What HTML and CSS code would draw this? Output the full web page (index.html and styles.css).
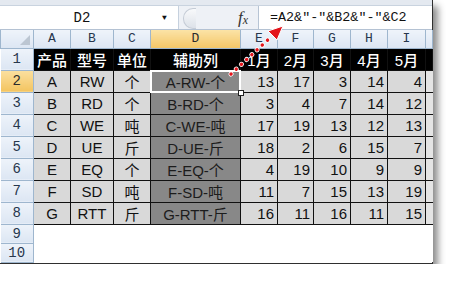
FILE: index.html
```html
<!DOCTYPE html>
<html lang="zh-CN">
<head>
  <meta charset="UTF-8" />
  <title>辅助列</title>
  <link rel="stylesheet" href="styles.css">
</head>
<body>

  <div class="window">
    <div class="topstrip"></div>

    <div class="fbar">
      <div class="namebox">
        <span class="cellref">D2</span>
        <span class="drop">&#9660;</span>
      </div>
      <div class="grip"></div>
      <div class="fx"><i>f</i><i class="x">x</i></div>
      <div class="formula">=A2&amp;"-"&amp;B2&amp;"-"&amp;C2</div>
    </div>

    <table class="sheet">
      <colgroup>
        <col style="width:33px"><col style="width:37px"><col style="width:43px"><col style="width:37px">
        <col style="width:90px"><col style="width:37px"><col style="width:36px"><col style="width:37px">
        <col style="width:37px"><col style="width:38px"><col style="width:7px">
      </colgroup>
      <tr class="colheads">
        <th class="corner"><span class="tri"></span></th>
        <th>A</th><th>B</th><th>C</th><th class="active">D</th><th>E</th>
        <th>F</th><th>G</th><th>H</th><th>I</th><th></th>
      </tr>
      <tr class="row titles">
        <th class="rh">1</th>
        <td>产品</td><td>型号</td><td>单位</td><td>辅助列</td>
        <td>1月</td><td>2月</td><td>3月</td><td>4月</td><td>5月</td><td></td>
      </tr>
      <tr class="row">
        <th class="rh active">2</th>
        <td>A</td><td>RW</td><td>个</td><td class="helper selected">A-RW-个</td>
        <td class="num">13</td><td class="num">17</td><td class="num">3</td><td class="num">14</td><td class="num">4</td><td class="edge"></td>
      </tr>
      <tr class="row">
        <th class="rh">3</th>
        <td>B</td><td>RD</td><td>个</td><td class="helper">B-RD-个</td>
        <td class="num">3</td><td class="num">4</td><td class="num">7</td><td class="num">14</td><td class="num">12</td><td class="edge"></td>
      </tr>
      <tr class="row">
        <th class="rh">4</th>
        <td>C</td><td>WE</td><td>吨</td><td class="helper">C-WE-吨</td>
        <td class="num">17</td><td class="num">19</td><td class="num">13</td><td class="num">12</td><td class="num">13</td><td class="edge"></td>
      </tr>
      <tr class="row">
        <th class="rh">5</th>
        <td>D</td><td>UE</td><td>斤</td><td class="helper">D-UE-斤</td>
        <td class="num">18</td><td class="num">2</td><td class="num">6</td><td class="num">15</td><td class="num">7</td><td class="edge"></td>
      </tr>
      <tr class="row">
        <th class="rh">6</th>
        <td>E</td><td>EQ</td><td>个</td><td class="helper">E-EQ-个</td>
        <td class="num">4</td><td class="num">19</td><td class="num">10</td><td class="num">9</td><td class="num">9</td><td class="edge"></td>
      </tr>
      <tr class="row">
        <th class="rh">7</th>
        <td>F</td><td>SD</td><td>吨</td><td class="helper">F-SD-吨</td>
        <td class="num">11</td><td class="num">7</td><td class="num">15</td><td class="num">13</td><td class="num">19</td><td class="edge"></td>
      </tr>
      <tr class="row">
        <th class="rh">8</th>
        <td>G</td><td>RTT</td><td>斤</td><td class="helper">G-RTT-斤</td>
        <td class="num">16</td><td class="num">11</td><td class="num">16</td><td class="num">11</td><td class="num">15</td><td class="edge"></td>
      </tr>
      <tr class="blank">
        <th class="rh">9</th>
        <td colspan="10"></td>
      </tr>
      <tr class="blank">
        <th class="rh">10</th>
        <td colspan="10"></td>
      </tr>
    </table>

    <svg class="arrow" width="454" height="285" viewBox="0 0 454 285">
      <line x1="231" y1="74" x2="272" y2="36" stroke="#fff" stroke-width="5" stroke-linecap="round" stroke-dasharray="0.1 7"/>
      <line x1="231" y1="74" x2="272" y2="36" stroke="#e3141b" stroke-width="3.4" stroke-linecap="round" stroke-dasharray="0.1 7"/>
      <polygon points="283,26 277,40 268,31" fill="#e3141b" stroke="#fff" stroke-width="1"/>
    </svg>
  </div>

</body>
</html>
```

FILE: styles.css
```css
body {
  margin: 0;
  background: #fff;
  font-family: 'Liberation Sans', 'Noto Sans CJK SC', sans-serif;
}

.window {
  position: relative;
  width: 432px;
  border-right: 1px solid #2f2f2f;
  border-bottom: 1px solid #2f2f2f;
  box-shadow: 5px 6px 7px rgba(0,0,0,0.45);
  background: #fff;
}

.topstrip {
  height: 5px;
  background: #e4e9f0;
  border-bottom: 1px solid #c9d3df;
}

.fbar {
  display: flex;
  height: 23px;
  background: #eef1f6;
  border-bottom: 1px solid #b4c2d3;
}

.namebox {
  width: 178px;
  display: flex;
  align-items: center;
  background: #fff;
  border-right: 1px solid #c6d1de;
  font-family: 'Liberation Mono', monospace;
  font-size: 14px;
  color: #111;
}

.cellref {
  flex: 1;
  text-align: center;
  padding-left: 2px;
}

.drop {
  font-size: 8px;
  width: 14px;
  margin-right: 2px;
}

.grip {
  width: 12px;
  height: 19px;
  margin: 2px 0 0 4px;
  border: 1px solid #c5ccd6;
  border-right: none;
  border-radius: 10px 0 0 10px;
  background: linear-gradient(#f8f9fb, #dde2e9);
}

.fx {
  margin-left: auto;
  width: 30px;
  display: flex;
  align-items: center;
  justify-content: center;
  padding-left: 4px;
  font-family: 'Liberation Serif', serif;
  font-size: 17px;
  color: #333;
}

.fx .x {
  font-size: 12px;
  margin-top: 5px;
}

.formula {
  width: 162px;
  padding-left: 11px;
  background: #fff;
  border-left: 1px solid #b7c4d4;
  font-family: 'Liberation Mono', monospace;
  font-size: 13.4px;
  line-height: 23px;
  color: #111;
}

.sheet {
  border-collapse: collapse;
  table-layout: fixed;
  width: 432px;
}

.sheet th {
  padding: 0;
  font-family: 'Liberation Mono', monospace;
  font-weight: normal;
  color: #27374d;
  background: linear-gradient(#eef3fa, #dce6f3);
  border: 1px solid #9eb6ce;
}

.colheads {
  height: 18px;
  font-size: 13px;
}

.colheads th {
  border-top: none;
}

.colheads th.active {
  background: linear-gradient(#fbe3a6, #f4c667);
  color: #2b2b2b;
}

.corner {
  position: relative;
}

.tri {
  position: absolute;
  right: 3px;
  bottom: 3px;
  border-left: 10px solid transparent;
  border-bottom: 10px solid #bcc6d2;
}

.sheet th.rh {
  font-size: 14px;
  border-left: none;
  text-align: center;
}

.sheet th.rh.active {
  background: linear-gradient(#fbe0a0, #f3c460);
  color: #2b2b2b;
}

.row {
  height: 22px;
}

.row td {
  padding: 0;
  text-align: center;
  font-size: 15px;
  color: #111;
  background: #d9d9d9;
  border: 1px solid #111;
}

.titles td {
  background: #000;
  color: #fff;
  font-size: 15px;
  font-weight: 500;
}

.row td.num {
  text-align: right;
  padding-right: 3px;
}

.row td.helper {
  background: #888;
  color: #1c1c1c;
}

.row td.edge {
  background: #e4e4e4;
  border-right: none;
}

.selected {
  position: relative;
}

.selected::after {
  content: "";
  position: absolute;
  left: -1px;
  top: -1px;
  right: -1px;
  bottom: -1px;
  border: 2px solid #fff;
}

.selected::before {
  content: "";
  position: absolute;
  right: -4px;
  bottom: -4px;
  width: 4px;
  height: 4px;
  background: #fff;
  border: 1px solid #222;
  z-index: 1;
}

.blank {
  height: 19px;
}

.blank td {
  background: #fff;
  border: none;
}

.arrow {
  position: absolute;
  left: 0;
  top: 0;
  pointer-events: none;
}
```
